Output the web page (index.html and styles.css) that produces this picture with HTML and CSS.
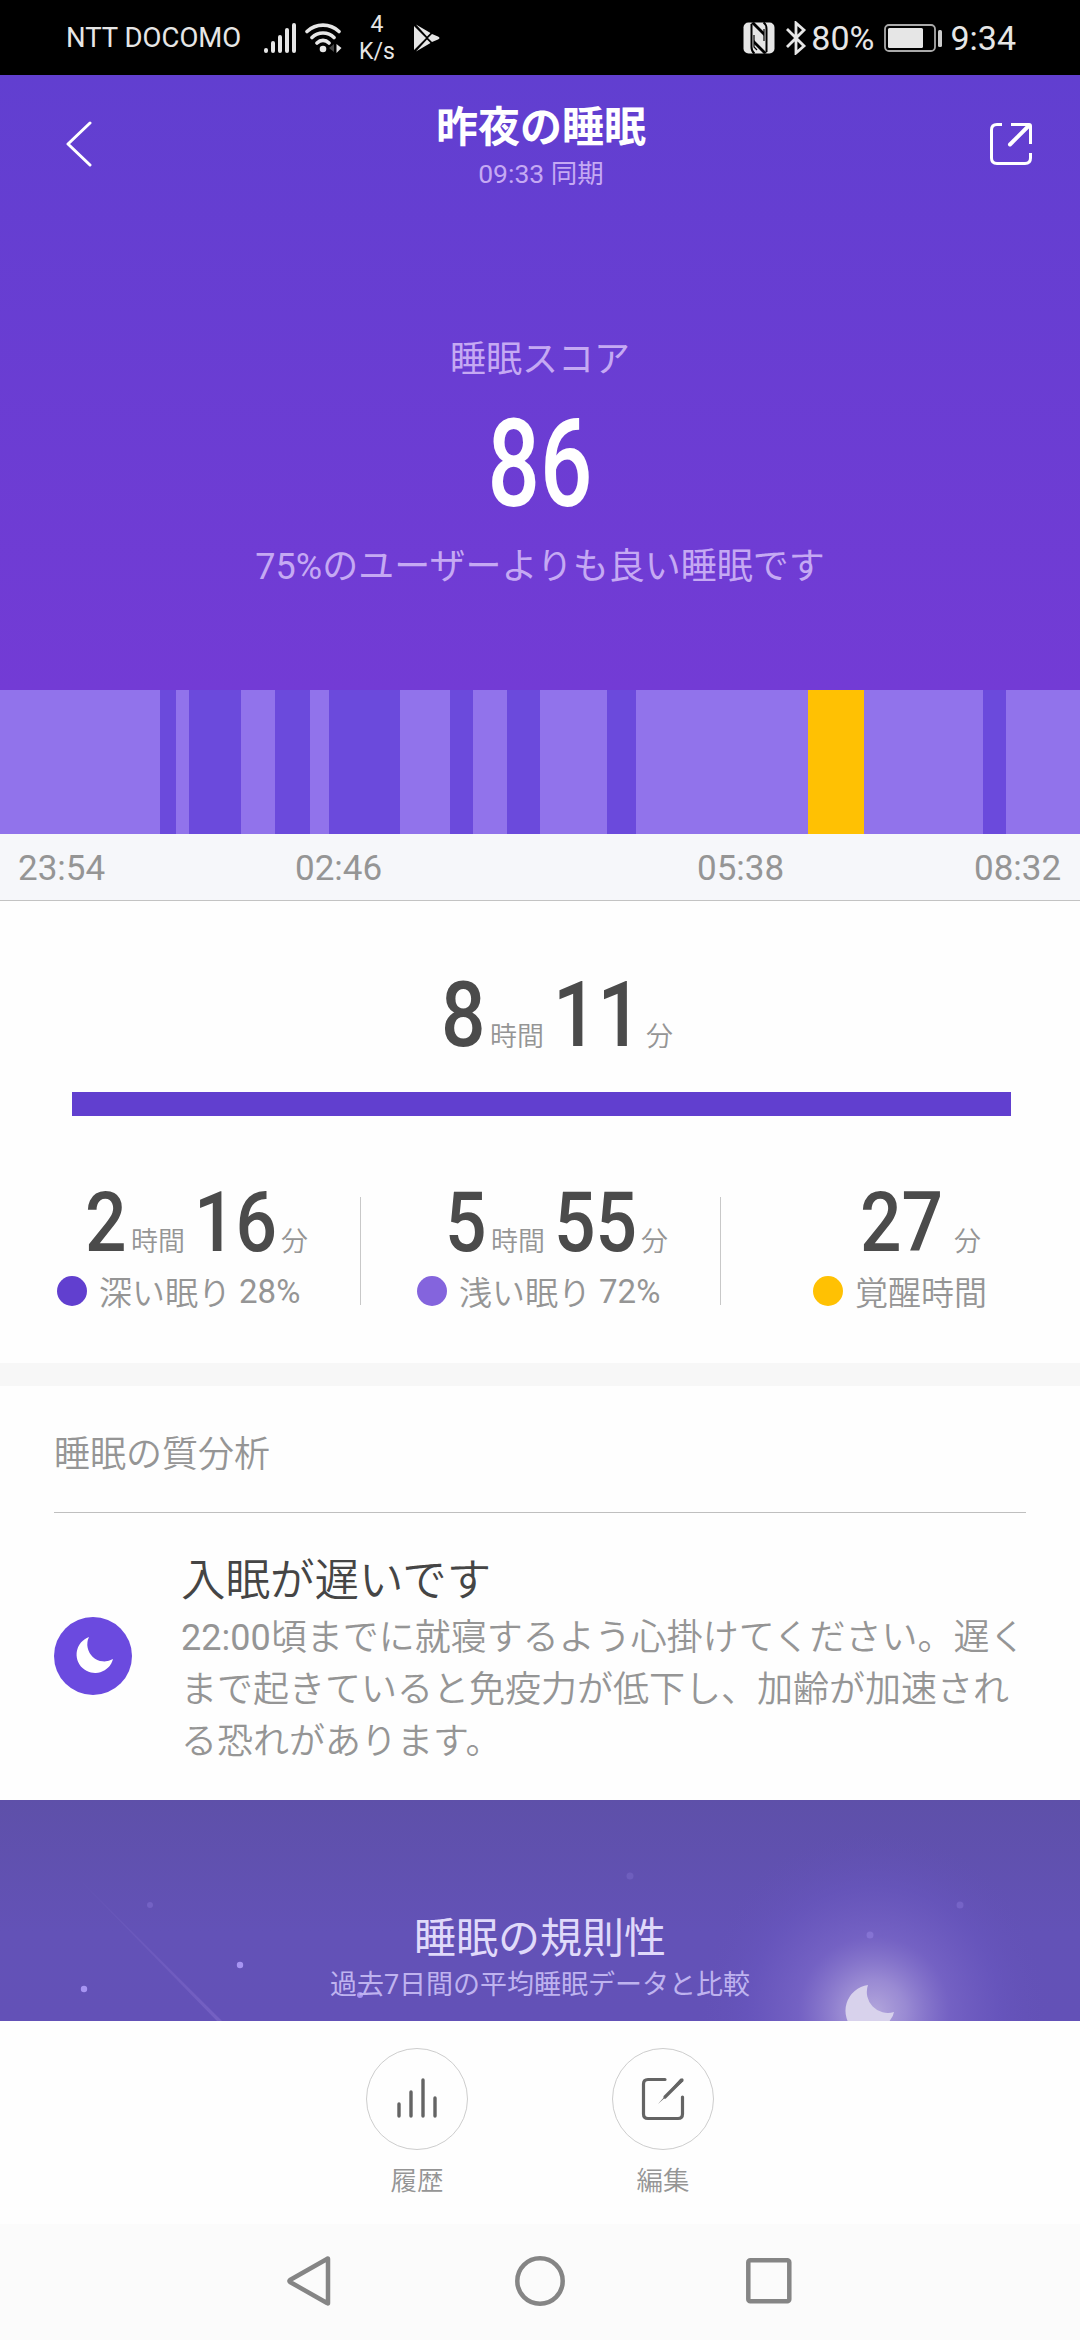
FILE: index.html
```html
<!DOCTYPE html>
<html lang="ja">
<head>
    <meta charset="UTF-8">
    <meta name="viewport" content="width=device-width, initial-scale=1.0">
    <title>昨夜の睡眠</title>
    <link rel="stylesheet" href="styles.css">
</head>
<body>
    <div class="status-bar">
        <span class="carrier">NTT DOCOMO</span>
        <svg class="signal" width="34" height="32" viewBox="0 0 34 32" stroke="#e6e6e6" stroke-width="4" stroke-linecap="round">
            <path d="M3 28v1M10 21v8M17 15v14M24 8v21M31 3v26"/>
        </svg>
        <svg class="wifi" width="38" height="32" viewBox="0 0 38 32" fill="none" stroke="#e6e6e6" stroke-width="3.6" stroke-linecap="round">
            <path d="M2 9.500C11 1 25 1 34 9.500M7 15.500c6-6 16-6 22 0M12 21c3.500-3.500 8.500-3.500 12 0"/>
            <circle cx="18" cy="27" r="3.300" fill="#e6e6e6" stroke="none"/>
            <path d="M29 22v8l-5-4z" fill="#444" stroke="none"/>
            <path d="M31.500 22v9l5-5z" fill="#e6e6e6" stroke="none"/>
        </svg>
        <div class="speed"><span>4</span><span>K/s</span></div>
        <svg class="play" width="26" height="28" viewBox="0 0 26 28" fill="#e6e6e6">
            <path d="M0 2v24l12-12zM2 .500l11 12 3.500-3.500zM2 27.500l11-12 3.500 3.500zM18 10l-4 4 4 4 6-2.500q3-1.500 0-3z"/>
        </svg>
        <svg class="nfc" width="32" height="32" viewBox="0 0 32 32">
            <rect x="0.500" y="0.500" width="31" height="31" rx="5" fill="#e6e6e6"/>
            <path d="M8.500 2v23q0 4.500 3 6.500M23.500 30V7q0-4.500-3-6.500" fill="none" stroke="#000" stroke-width="2"/>
            <path d="M8 1l13 13v-4L11 0zM24 31L11 18v4l10 10z"/>
            <path d="M11 13v12l3 3M21 19V7" fill="none" stroke="#000" stroke-width="1.200"/>
        </svg>
        <svg class="bluetooth" width="22" height="34" viewBox="0 0 22 34" fill="none" stroke="#e6e6e6" stroke-width="2.800">
            <path d="M2 8l17 17-8 7V2l8 7L2 26"/>
        </svg>
        <span class="percent">80%</span>
        <svg class="battery" width="58" height="28" viewBox="0 0 58 28">
            <rect x="1" y="1" width="50" height="26" rx="4" fill="none" stroke="#aaa" stroke-width="1.800"/>
            <rect x="4" y="4" width="35" height="20" rx="1.500" fill="#e6e6e6"/>
            <rect x="54" y="6" width="4" height="17" rx="1.500" fill="#ccc"/>
        </svg>
        <span class="clock">9:34</span>
    </div>

    <div class="hero">
        <div class="header">
            <svg class="back" width="26" height="46" viewBox="0 0 26 46" fill="none" stroke="#fff" stroke-width="3" stroke-linecap="round" stroke-linejoin="round">
                <path d="M24 2L2 23l22 21"/>
            </svg>
            <div class="title">
                <h1>昨夜の睡眠</h1>
                <p>09:33 同期</p>
            </div>
            <svg class="share" width="42" height="42" viewBox="0 0 42 42" fill="none" stroke="#fff" stroke-width="3">
                <path d="M12 1.500H7Q1.500 1.500 1.500 7v28Q1.500 40.500 7 40.500h28Q40.500 40.500 40.500 35v-5M21 1.500h18q1.500 0 1.500 1.500v18"/>
                <path d="M20 21.500L39 2.500" stroke-width="4" stroke-linecap="round"/>
            </svg>
        </div>
        <p class="score-label">睡眠スコア</p>
        <p class="score"><span>86</span></p>
        <p class="score-note">75%のユーザーよりも良い睡眠です</p>
    </div>

    <div class="chart">
        <i class="light" style="width:160px"></i>
        <i class="deep" style="width:16px"></i>
        <i class="light" style="width:13px"></i>
        <i class="deep" style="width:52px"></i>
        <i class="light" style="width:34px"></i>
        <i class="deep" style="width:35px"></i>
        <i class="light" style="width:19px"></i>
        <i class="deep" style="width:71px"></i>
        <i class="light" style="width:50px"></i>
        <i class="deep" style="width:23px"></i>
        <i class="light" style="width:34px"></i>
        <i class="deep" style="width:33px"></i>
        <i class="light" style="width:67px"></i>
        <i class="deep" style="width:29px"></i>
        <i class="light" style="width:172px"></i>
        <i class="awake" style="width:56px"></i>
        <i class="light" style="width:119px"></i>
        <i class="deep" style="width:23px"></i>
        <i class="light" style="width:74px"></i>
    </div>
    <div class="axis">
        <span>23:54</span><span>02:46</span><span>05:38</span><span>08:32</span>
    </div>

    <div class="summary">
        <div class="time total">
            <b class="one">8</b><small>時間</small><b class="two">11</b><small>分</small>
        </div>
        <div class="total-bar"></div>
        <div class="stats">
            <div class="stat">
                <div class="time"><b class="one">2</b><small>時間</small><b class="two">16</b><small>分</small></div>
                <div class="legend"><i class="dot dot-deep"></i>深い眠り <span class="digits">28%</span></div>
            </div>
            <div class="stat">
                <div class="time"><b class="one">5</b><small>時間</small><b class="two">55</b><small>分</small></div>
                <div class="legend"><i class="dot dot-light"></i>浅い眠り <span class="digits">72%</span></div>
            </div>
            <div class="stat stat-awake">
                <div class="time"><b class="two">27</b><small>分</small></div>
                <div class="legend"><i class="dot dot-awake"></i>覚醒時間</div>
            </div>
        </div>
    </div>

    <div class="analysis">
        <h2>睡眠の質分析</h2>
        <div class="advice">
            <svg class="advice-icon" width="78" height="78" viewBox="0 0 78 78">
                <circle cx="39" cy="39" r="39" fill="#6b4adf"/>
                <path d="M35 20A18.500 18.500 0 1 0 59 42A17 17 0 0 1 35 20z" fill="#fff"/>
            </svg>
            <div class="advice-text">
                <h3>入眠が遅いです</h3>
                <p><span class="digits">22:00</span>頃までに就寝するよう心掛けてください。遅く<br>まで起きていると免疫力が低下し、加齢が加速され<br>る恐れがあります。</p>
            </div>
        </div>
    </div>

    <div class="regularity">
        <svg class="night" width="1080" height="221" viewBox="0 0 1080 221">
            <defs>
                <radialGradient id="glow" gradientUnits="userSpaceOnUse" cx="874" cy="212" r="180">
                    <stop offset="0" stop-color="#b3a6dc"/>
                    <stop offset="0.180" stop-color="#9f90d6" stop-opacity="0.900"/>
                    <stop offset="0.420" stop-color="#7d6aca" stop-opacity="0.650"/>
                    <stop offset="0.700" stop-color="#6a58c0" stop-opacity="0.500"/>
                    <stop offset="1" stop-color="#6351b5" stop-opacity="0"/>
                </radialGradient>
                <linearGradient id="trail" x1="0" y1="0" x2="1" y2="1">
                    <stop offset="0" stop-color="#7c67c8" stop-opacity="0"/>
                    <stop offset="1" stop-color="#7c67c8" stop-opacity="0.700"/>
                </linearGradient>
            </defs>
            <rect width="1080" height="221" fill="url(#glow)"/>
            <path d="M68 68L222 221h-5z" fill="url(#trail)"/>
            <g fill="#a794f2">
                <circle cx="84" cy="189" r="3.200"/>
                <circle cx="240" cy="165" r="3.200"/>
                <circle cx="360" cy="195" r="3"/>
                <circle cx="150" cy="105" r="3" opacity="0.250"/>
                <circle cx="630" cy="76" r="3.500" opacity="0.200"/>
                <circle cx="870" cy="135" r="3.500" opacity="0.350"/>
                <circle cx="960" cy="105" r="3.500" opacity="0.250"/>
            </g>
            <path d="M868 185A26 26 0 0 0 854 230H880Q893 220 894 212A21 21 0 0 1 868 185z" fill="#d8d2ec"/>
        </svg>
        <h2>睡眠の規則性</h2>
        <p>過去7日間の平均睡眠データと比較</p>
    </div>

    <div class="actions">
        <div class="action">
            <span class="round">
                <svg width="42" height="44" viewBox="0 0 42 44" stroke="#646464" stroke-width="3.400" stroke-linecap="round">
                    <path d="M3 27v12M15 15v24M27 3v36M39 21v18"/>
                </svg>
            </span>
            <span>履歴</span>
        </div>
        <div class="action">
            <span class="round">
                <svg width="44" height="44" viewBox="0 0 44 44" fill="none" stroke="#646464" stroke-width="3.200" stroke-linecap="round">
                    <path d="M24 2.500H7Q2.500 2.500 2.500 7v30Q2.500 41.500 7 41.500h30Q41.500 41.500 41.500 37V20"/>
                    <path d="M17 27L39.500 1.500l3 2.500z" fill="#646464" stroke="none"/>
                    <path d="M24 20L41 3"/>
                </svg>
            </span>
            <span>編集</span>
        </div>
    </div>

    <div class="nav-bar">
        <svg width="50" height="52" viewBox="0 0 50 52" fill="none" stroke="#858585" stroke-width="4.500" stroke-linejoin="round">
            <path d="M42 4v44q0 1-1 0L4 27q-1-1 0-2L41 4q1-1 1 0z"/>
        </svg>
        <svg width="50" height="52" viewBox="0 0 50 52" fill="none" stroke="#858585" stroke-width="4.500">
            <circle cx="25" cy="26" r="22.700"/>
        </svg>
        <svg width="50" height="52" viewBox="0 0 50 52" fill="none" stroke="#858585" stroke-width="4.500">
            <rect x="4.300" y="5.300" width="41" height="41" rx="2"/>
        </svg>
    </div>
</body>
</html>
```
FILE: styles.css
```css
* {
    box-sizing: border-box;
    margin: 0;
    padding: 0;
}
body {
    width: 1080px;
    height: 2340px;
    overflow: hidden;
    background-color: #fefefe;
    font-family: Roboto, "Noto Sans CJK JP", sans-serif;
    color: #959595;
}
svg {
    display: block;
    flex: none;
}
h1, h2, h3 {
    font-weight: 400;
}
.digits {
    font-weight: 400;
}

/* status bar */
.status-bar {
    display: flex;
    align-items: center;
    height: 75px;
    padding: 0 64px 0 66px;
    background-color: #000;
    color: #e6e6e6;
    line-height: 40px;
}
.carrier {
    width: 197px;
    font-size: 27.5px;
}
.wifi {
    margin-left: 8px;
}
.speed {
    display: flex;
    flex-direction: column;
    align-items: center;
    width: 36px;
    margin-left: 16px;
    font-size: 23px;
    line-height: 27px;
}
.play {
    margin-left: 19px;
}
.nfc {
    margin-left: auto;
}
.bluetooth {
    margin-left: 10px;
}
.percent, .clock {
    font-size: 34px;
}
.percent {
    margin-left: 4px;
}
.battery {
    margin-left: 10px;
}
.clock {
    margin-left: 8px;
}

/* header and score */
.hero {
    height: 615px;
    background: linear-gradient(#613fd0, #733bd5);
    color: #c5a9f3;
    text-align: center;
}
.header {
    display: flex;
    justify-content: space-between;
    padding: 26px 48px 0 66px;
    height: 119px;
}
.back {
    margin-top: 20px;
}
.share {
    margin-top: 22px;
}
.title h1 {
    color: #fff;
    font-size: 42px;
    font-weight: 700;
    line-height: 54px;
}
.title p {
    font-size: 26.5px;
    line-height: 38px;
}
.score-label {
    margin-top: 141px;
    font-size: 36px;
    line-height: 50px;
}
.score {
    height: 157px;
    color: #fff;
    font-size: 123px;
    font-weight: 500;
    line-height: 159px;
}
.score span {
    display: inline-block;
    transform: scaleX(0.75);
}
.score-note {
    font-size: 36px;
    line-height: 50px;
}

/* sleep phases */
.chart {
    display: flex;
    height: 144px;
}
.light {
    background-color: #9173eb;
}
.deep {
    background-color: #6b4adc;
}
.awake {
    background-color: #ffc103;
}
.axis {
    display: grid;
    grid-template-columns: 277px 402px 277px auto;
    height: 67px;
    padding-left: 18px;
    border-bottom: 1px solid #c3c3c3;
    background-color: #f6f7fa;
    font-size: 35px;
    line-height: 69px;
}

/* totals */
.summary {
    height: 462px;
    padding-top: 70px;
}
.time {
    display: flex;
    align-items: baseline;
    height: 84px;
    font-size: 84px;
    line-height: 84px;
}
.time b {
    color: #4b4b4b;
    font-weight: 500;
    transform: scaleX(0.87);
    transform-origin: left;
}
.one {
    width: 41px;
}
.two {
    width: 82px;
}
.time small {
    margin: 0 9px 0 5px;
    font-size: 27px;
    font-weight: 350;
    line-height: 27px;
}
.total {
    justify-content: center;
    height: 90px;
    padding-left: 43px;
    font-size: 90px;
    line-height: 90px;
}
.total .one {
    width: 44px;
}
.total .two {
    width: 88px;
}
.total-bar {
    width: 939px;
    height: 24px;
    margin: 31px 0 0 72px;
    background-color: #613fcf;
}
.stats {
    display: flex;
    margin-top: 65px;
}
.stat {
    position: relative;
    width: 360px;
    height: 140px;
    padding-left: 57px;
}
.stat + .stat::before {
    content: "";
    position: absolute;
    left: 0;
    top: 16px;
    width: 1px;
    height: 108px;
    background-color: #c8c8c8;
}
.stat .time {
    padding-left: 28px;
}
.stat-awake {
    padding-left: 93px;
}
.stat-awake .time {
    padding-left: 47px;
}
.stat-awake small {
    margin-left: 12px;
}
.legend {
    display: flex;
    align-items: center;
    height: 50px;
    margin-top: 1px;
    font-size: 33px;
    font-weight: 350;
    white-space: pre;
}
.dot {
    width: 30px;
    height: 30px;
    margin-right: 12px;
    border-radius: 50%;
}
.dot-deep {
    background-color: #613fcf;
}
.dot-light {
    background-color: #8464dd;
}
.dot-awake {
    background-color: #ffc103;
}

/* analysis */
.analysis {
    height: 437px;
    padding: 0 54px;
    border-top: 23px solid #f7f7f7;
}
.analysis h2 {
    height: 127px;
    border-bottom: 1px solid #bfbfbf;
    font-size: 36px;
    font-weight: 350;
    line-height: 138px;
}
.advice {
    display: flex;
    padding-top: 37px;
}
.advice-icon {
    margin: 67px 49px 0 0;
}
.advice-text h3 {
    color: #454545;
    font-size: 44.5px;
    font-weight: 350;
    line-height: 62px;
}
.advice-text p {
    font-size: 36px;
    font-weight: 350;
    line-height: 52px;
    white-space: nowrap;
}

/* regularity card */
.regularity {
    position: relative;
    height: 221px;
    padding-top: 109px;
    overflow: hidden;
    background: linear-gradient(#5e50a9, #6352b7 60%, #6351b7);
    text-align: center;
}
.night {
    position: absolute;
    left: 0;
    top: 0;
}
.regularity h2, .regularity p {
    position: relative;
}
.regularity h2 {
    color: #e0dafa;
    font-size: 42px;
    line-height: 60px;
}
.regularity p {
    color: #bfb3ef;
    font-size: 27px;
    line-height: 32px;
}

/* bottom actions */
.actions {
    display: flex;
    justify-content: center;
    gap: 144px;
    height: 203px;
    padding-top: 27px;
}
.action {
    width: 102px;
    font-size: 26.5px;
    font-weight: 350;
    line-height: 62px;
    text-align: center;
}
.round {
    display: flex;
    align-items: center;
    justify-content: center;
    width: 102px;
    height: 102px;
    border: 1.500px solid #cdcdcd;
    border-radius: 50%;
}
.nav-bar {
    display: flex;
    align-items: center;
    justify-content: space-between;
    height: 116px;
    padding: 0 286px 2px;
    background-color: #fbfbfb;
}
```
